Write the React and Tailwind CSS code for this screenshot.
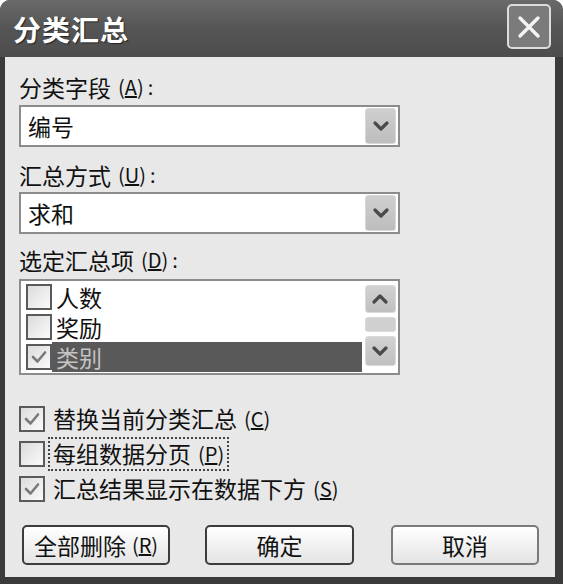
import React from 'react'

const font = { fontFamily: '"Noto Sans CJK SC", "Noto Sans", sans-serif' }

const Chevron = ({ up }) => (
  <svg width="18" height="12" viewBox="0 0 18 12">
    <path
      d={up ? 'M3 9 L9 3 L15 9' : 'M3 3 L9 9 L15 3'}
      fill="none"
      stroke="#4a4a4a"
      strokeWidth="3.2"
      strokeLinecap="round"
      strokeLinejoin="round"
    />
  </svg>
)

const Check = () => (
  <svg width="18" height="16" viewBox="0 0 18 16">
    <path d="M3 8 L7.5 12.5 L15 3.5" fill="none" stroke="#7a7a7a" strokeWidth="2.6" strokeLinecap="round" strokeLinejoin="round" />
  </svg>
)

const Box = ({ checked }) => (
  <div className="w-[26px] h-[26px] shrink-0 border-2 border-[#5a5a5a] bg-gradient-to-br from-[#dcdcdc] to-[#fafafa] flex items-center justify-center">
    {checked && <Check />}
  </div>
)

const Label = ({ text, k }) => (
  <div className="h-[28px] flex items-center text-[23px] leading-none text-[#111]">
    {text}
    <span className="ml-[7px] text-[20px]">(<u>{k}</u>)</span>
    <span className="ml-[4px] text-[20px]">:</span>
  </div>
)

const Combo = ({ value }) => (
  <div className="w-[381px] h-[42px] border-2 border-[#8c8c8c] bg-white flex items-center justify-between pl-[7px] pr-[2px]">
    <span className="text-[23px] leading-none text-[#111]">{value}</span>
    <div className="w-[31px] h-[36px] rounded-[3px] bg-gradient-to-b from-[#cfcfcf] to-[#bdbdbd] border border-[#d8d8d8] flex items-center justify-center">
      <Chevron />
    </div>
  </div>
)

const ListRow = ({ text, checked, selected }) => (
  <div className="h-[30px] flex items-center pl-[5px]">
    <Box checked={checked} />
    <div
      className={`h-[30px] flex-1 flex items-center pl-[4px] text-[23px] leading-none ${
        selected ? 'bg-[#595959] text-[#c4c4c4]' : 'text-[#111]'
      }`}
    >
      {text}
    </div>
  </div>
)

const OptionRow = ({ text, k, checked, focused }) => (
  <div className="h-[35px] flex items-center">
    <Box checked={checked} />
    <div
      className={`ml-[5px] px-[3px] h-[30px] flex items-center text-[23px] leading-none text-[#111] ${
        focused ? 'outline-2 outline-dotted outline-[#444]' : ''
      }`}
    >
      {text}
      <span className="ml-[7px] text-[20px]">(<u>{k}</u>)</span>
    </div>
  </div>
)

const Button = ({ children, dark }) => (
  <div
    className={`h-[40px] rounded-[5px] bg-gradient-to-b from-white to-[#e4e4e4] flex items-center justify-center text-[23px] leading-none text-[#111] ${
      dark ? 'border-2 border-[#3c3c3c]' : 'border-2 border-[#7a7a7a]'
    }`}
  >
    {children}
  </div>
)

export default function App() {
  return (
    <div style={font} className="w-[563px] h-[584px] bg-[#3b3b3b] rounded-t-[10px] flex flex-col overflow-hidden">
      {/* title bar */}
      <div className="h-[57px] shrink-0 bg-gradient-to-b from-[#6a6a6a] via-[#555555] to-[#4d4d4d] flex items-center justify-between pl-[13px] pr-[12px]">
        <span className="text-[28px] font-bold text-white tracking-[1px] [text-shadow:1px_1px_1px_#222]">分类汇总</span>
        <div className="w-[44px] h-[45px] mb-[4px] rounded-[5px] border-2 border-[#dcdcdc] bg-[#7b7b7b] flex items-center justify-center">
          <svg width="26" height="26" viewBox="0 0 26 26">
            <path d="M4 4 L22 22 M22 4 L4 22" stroke="#f4f4f4" strokeWidth="3.4" strokeLinecap="round" />
          </svg>
        </div>
      </div>

      {/* client area */}
      <div className="flex-1 ml-[5px] mr-[8px] mb-[7px] bg-[#e8e8e8] pl-[14px] pt-[16px] flex flex-col">
        <Label text="分类字段" k="A" />
        <div className="mt-[4px]">
          <Combo value="编号" />
        </div>

        <div className="mt-[14px]">
          <Label text="汇总方式" k="U" />
        </div>
        <div className="mt-[3px]">
          <Combo value="求和" />
        </div>

        <div className="mt-[12px]">
          <Label text="选定汇总项" k="D" />
        </div>
        <div className="mt-[5px] w-[381px] h-[96px] border-2 border-[#8c8c8c] bg-white flex">
          <div className="flex-1 pt-[1px] flex flex-col">
            <ListRow text="人数" />
            <ListRow text="奖励" />
            <ListRow text="类别" checked selected />
          </div>
          <div className="w-[36px] pl-[2px] pr-[2px] pt-[4px] flex flex-col items-center gap-[4px] bg-white">
            <div className="w-[31px] h-[28px] rounded-[3px] bg-gradient-to-b from-[#d2d2d2] to-[#c0c0c0] border border-[#dadada] flex items-center justify-center">
              <Chevron up />
            </div>
            <div className="w-[31px] h-[15px] rounded-[3px] bg-[#d0d0d0] border border-[#dadada]" />
            <div className="w-[31px] h-[30px] rounded-[3px] bg-gradient-to-b from-[#d2d2d2] to-[#c0c0c0] border border-[#dadada] flex items-center justify-center">
              <Chevron />
            </div>
          </div>
        </div>

        <div className="mt-[26px] flex flex-col">
          <OptionRow text="替换当前分类汇总" k="C" checked />
          <OptionRow text="每组数据分页" k="P" focused />
          <OptionRow text="汇总结果显示在数据下方" k="S" checked />
        </div>

        <div className="mt-[19px] flex items-center">
          <div className="w-[148px] ml-[3px]">
            <Button dark>
              全部删除<span className="ml-[6px] text-[20px]">(<u>R</u>)</span>
            </Button>
          </div>
          <div className="w-[149px] ml-[35px]">
            <Button dark>确定</Button>
          </div>
          <div className="w-[148px] ml-[37px]">
            <Button>取消</Button>
          </div>
        </div>
      </div>
    </div>
  )
}
